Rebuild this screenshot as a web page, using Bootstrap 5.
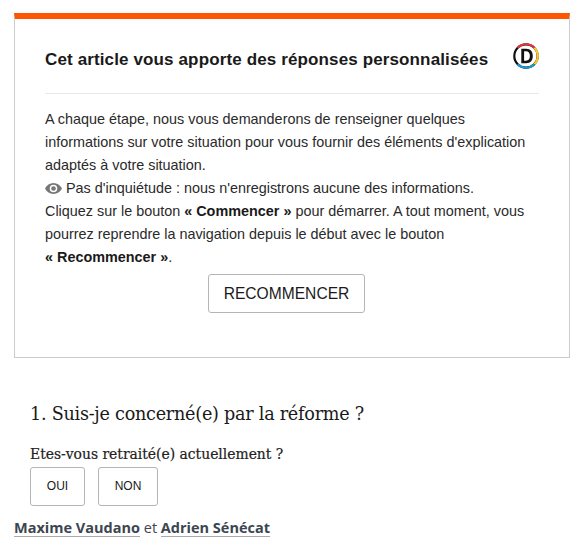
<!DOCTYPE html>
<html lang="fr">
<head>
<meta charset="utf-8">
<title>Décodeurs</title>
<link href="https://cdn.jsdelivr.net/npm/bootstrap@5.3.0/dist/css/bootstrap.min.css" rel="stylesheet">
<style>
body{background:#fff;color:#1a1a1a;font-family:"Liberation Sans",Arial,sans-serif;padding:13px 15px 0 14px;overflow:hidden}
.intro-box{border:1px solid #ccc;border-top:6px solid #f50;border-radius:0;height:345px;padding:0 30px}
.intro-head{height:75px;border-bottom:1px solid #e8e8e8;padding-top:9px}
.intro-title{font-size:17px;font-weight:700;letter-spacing:.13px;margin:0;color:#1a1a1a}
.logo-mark{width:26px;height:26px;display:block;margin-top:-9px}
.intro-text{font-size:14.4px;line-height:23px;color:#2a2a2a;margin:14px 0 0}
.intro-text strong{color:#1a1a1a}
.eye-icon{width:17px;height:11px;vertical-align:-1px}
.btn-restart{border:1px solid #b5b5b5;border-radius:3px;font-size:15.6px;color:#1a1a1a;padding:0;width:157px;height:39px;background:#fff;line-height:37px;display:block;margin:5px 0 0 163px}
.quiz-zone{padding-left:16px}
.quiz-title{font-family:"DejaVu Serif",Georgia,serif;font-size:17.6px;letter-spacing:-.25px;font-weight:400;margin:44px 0 0;line-height:24px;color:#1a1a1a}
.quiz-label{font-family:"DejaVu Serif",Georgia,serif;font-size:13.9px;margin:18px 0 3px;line-height:20px;color:#222;-webkit-text-stroke:.2px #222}
.choice-btn{border:1px solid #b5b5b5;border-radius:3px;font-size:12px;color:#1a1a1a;background:#fff;padding:0;height:39px;line-height:37px}
.choice-oui{width:55px}.choice-non{width:60px;margin-left:13px}
.byline{font-family:"Open Sans","Liberation Sans",sans-serif;font-size:14.5px;line-height:18px;margin:13px 0 0;color:#445}
.byline a{color:#3c4650;font-weight:700;text-decoration:none;border-bottom:1px solid #aaa;display:inline-block;line-height:17px}
</style>
</head>
<body>
<div class="intro-box">
  <div class="intro-head d-flex align-items-center justify-content-between">
    <h2 class="intro-title">Cet article vous apporte des réponses personnalisées</h2>
    <svg class="logo-mark" viewBox="0 0 26 26" role="img" aria-label="Les Décodeurs">
      <circle cx="13" cy="13" r="11.700" fill="none" stroke="#111" stroke-width="2.200"/>
      <path d="M4.700 4.700A11.700 11.700 0 0 1 21.300 4.700" fill="none" stroke="#e8343c" stroke-width="2.200"/>
      <path d="M21.300 4.700A11.700 11.700 0 0 1 21.300 21.300" fill="none" stroke="#fbc92f" stroke-width="2.200"/>
      <path d="M21.300 21.300A11.700 11.700 0 0 1 4.700 21.300" fill="none" stroke="#1a9ad6" stroke-width="2.200"/>
      <path fill-rule="evenodd" d="M8.300 5.800h4.900c4.400 0 6.600 3 6.600 7.200s-2.200 7.200-6.600 7.200H8.300zM11.100 8.300v9.400h1.900c2.500 0 3.900-1.800 3.900-4.700s-1.400-4.700-3.900-4.700z" fill="#111"/>
    </svg>
  </div>
  <p class="intro-text">A chaque étape, nous vous demanderons de renseigner quelques informations sur votre situation pour vous fournir des éléments d'explication adaptés à votre situation.<br>
  <svg class="eye-icon" viewBox="0 0 17 11" aria-hidden="true"><path fill-rule="evenodd" fill="#767676" d="M8.500 0C4.800 0 1.700 2.200 0 5.500 1.700 8.800 4.800 11 8.500 11S15.300 8.800 17 5.500C15.300 2.200 12.200 0 8.500 0zM8.500 9.300a3.800 3.800 0 1 1 0-7.600 3.800 3.800 0 0 1 0 7.600z"/><circle cx="8.500" cy="5.500" r="2.300" fill="#767676"/></svg> Pas d'inquiétude : nous n'enregistrons aucune des informations.<br>
  Cliquez sur le bouton <strong>« Commencer »</strong> pour démarrer. A tout moment, vous pourrez reprendre la navigation depuis le début avec le bouton <strong>«&nbsp;Recommencer&nbsp;»</strong>.</p>
  <button type="button" class="btn btn-restart">RECOMMENCER</button>
</div>
<div class="quiz-zone">
  <h3 class="quiz-title">1. Suis-je concerné(e) par la réforme ?</h3>
  <p class="quiz-label">Etes-vous retraité(e) actuellement ?</p>
  <div class="d-flex mt-0">
    <button type="button" class="btn choice-btn choice-oui">OUI</button>
    <button type="button" class="btn choice-btn choice-non">NON</button>
  </div>
</div>
<p class="byline"><a href="#">Maxime Vaudano</a> et <a href="#">Adrien Sénécat</a></p>
</body>
</html>
